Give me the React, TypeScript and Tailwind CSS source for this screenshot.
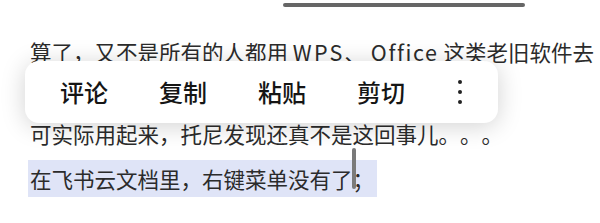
import React from "react";

export default function App() {
  const font = { fontFamily: '"Noto Sans CJK SC", "Noto Sans", sans-serif' };
  return (
    <div className="relative h-[223px] w-[600px] overflow-hidden bg-white text-[#2b2b2b]" style={font}>
      <div className="absolute left-[283px] top-[3px] h-[4px] w-[242px] rounded-full bg-[#666666]" />
      <div className="pl-[30px] pt-[31px] text-[21.5px] leading-[41px] whitespace-nowrap [text-spacing-trim:space-all]">
        <p>
          算了，又不是所有的人都用 <span className="tracking-[2.2px]">WPS</span>、 <span className="tracking-[1.6px]">Office</span> 这类老旧软件去
        </p>
        <p className="mt-[41px]">可实际用起来，托尼发现还真不是这回事儿。。。</p>
        <p className="mt-[4px]">
          <span className="-ml-[2px] bg-[#dfe4f7] py-[3px] pl-[2px] pr-[3px]">在飞书云文档里，右键菜单没有了；</span>
        </p>
      </div>
      <div className="absolute left-[352px] top-[148px] h-[41px] w-[4px] rounded-full bg-[#7a7a7a]" />
      <div className="absolute left-[25px] top-[61px] flex h-[62px] w-[473px] items-center gap-[51px] rounded-[14px] bg-white pl-[35px] text-[24px] font-medium text-[#151515] shadow-[0_3px_24px_rgba(0,0,0,0.18)]">
        <span>评论</span>
        <span>复制</span>
        <span>粘贴</span>
        <span>剪切</span>
        <svg width="6" height="26" viewBox="0 0 6 26" className="ml-[1px]">
          <circle cx="3" cy="3" r="2" fill="#222" />
          <circle cx="3" cy="13" r="2" fill="#222" />
          <circle cx="3" cy="23" r="2" fill="#222" />
        </svg>
      </div>
    </div>
  );
}
